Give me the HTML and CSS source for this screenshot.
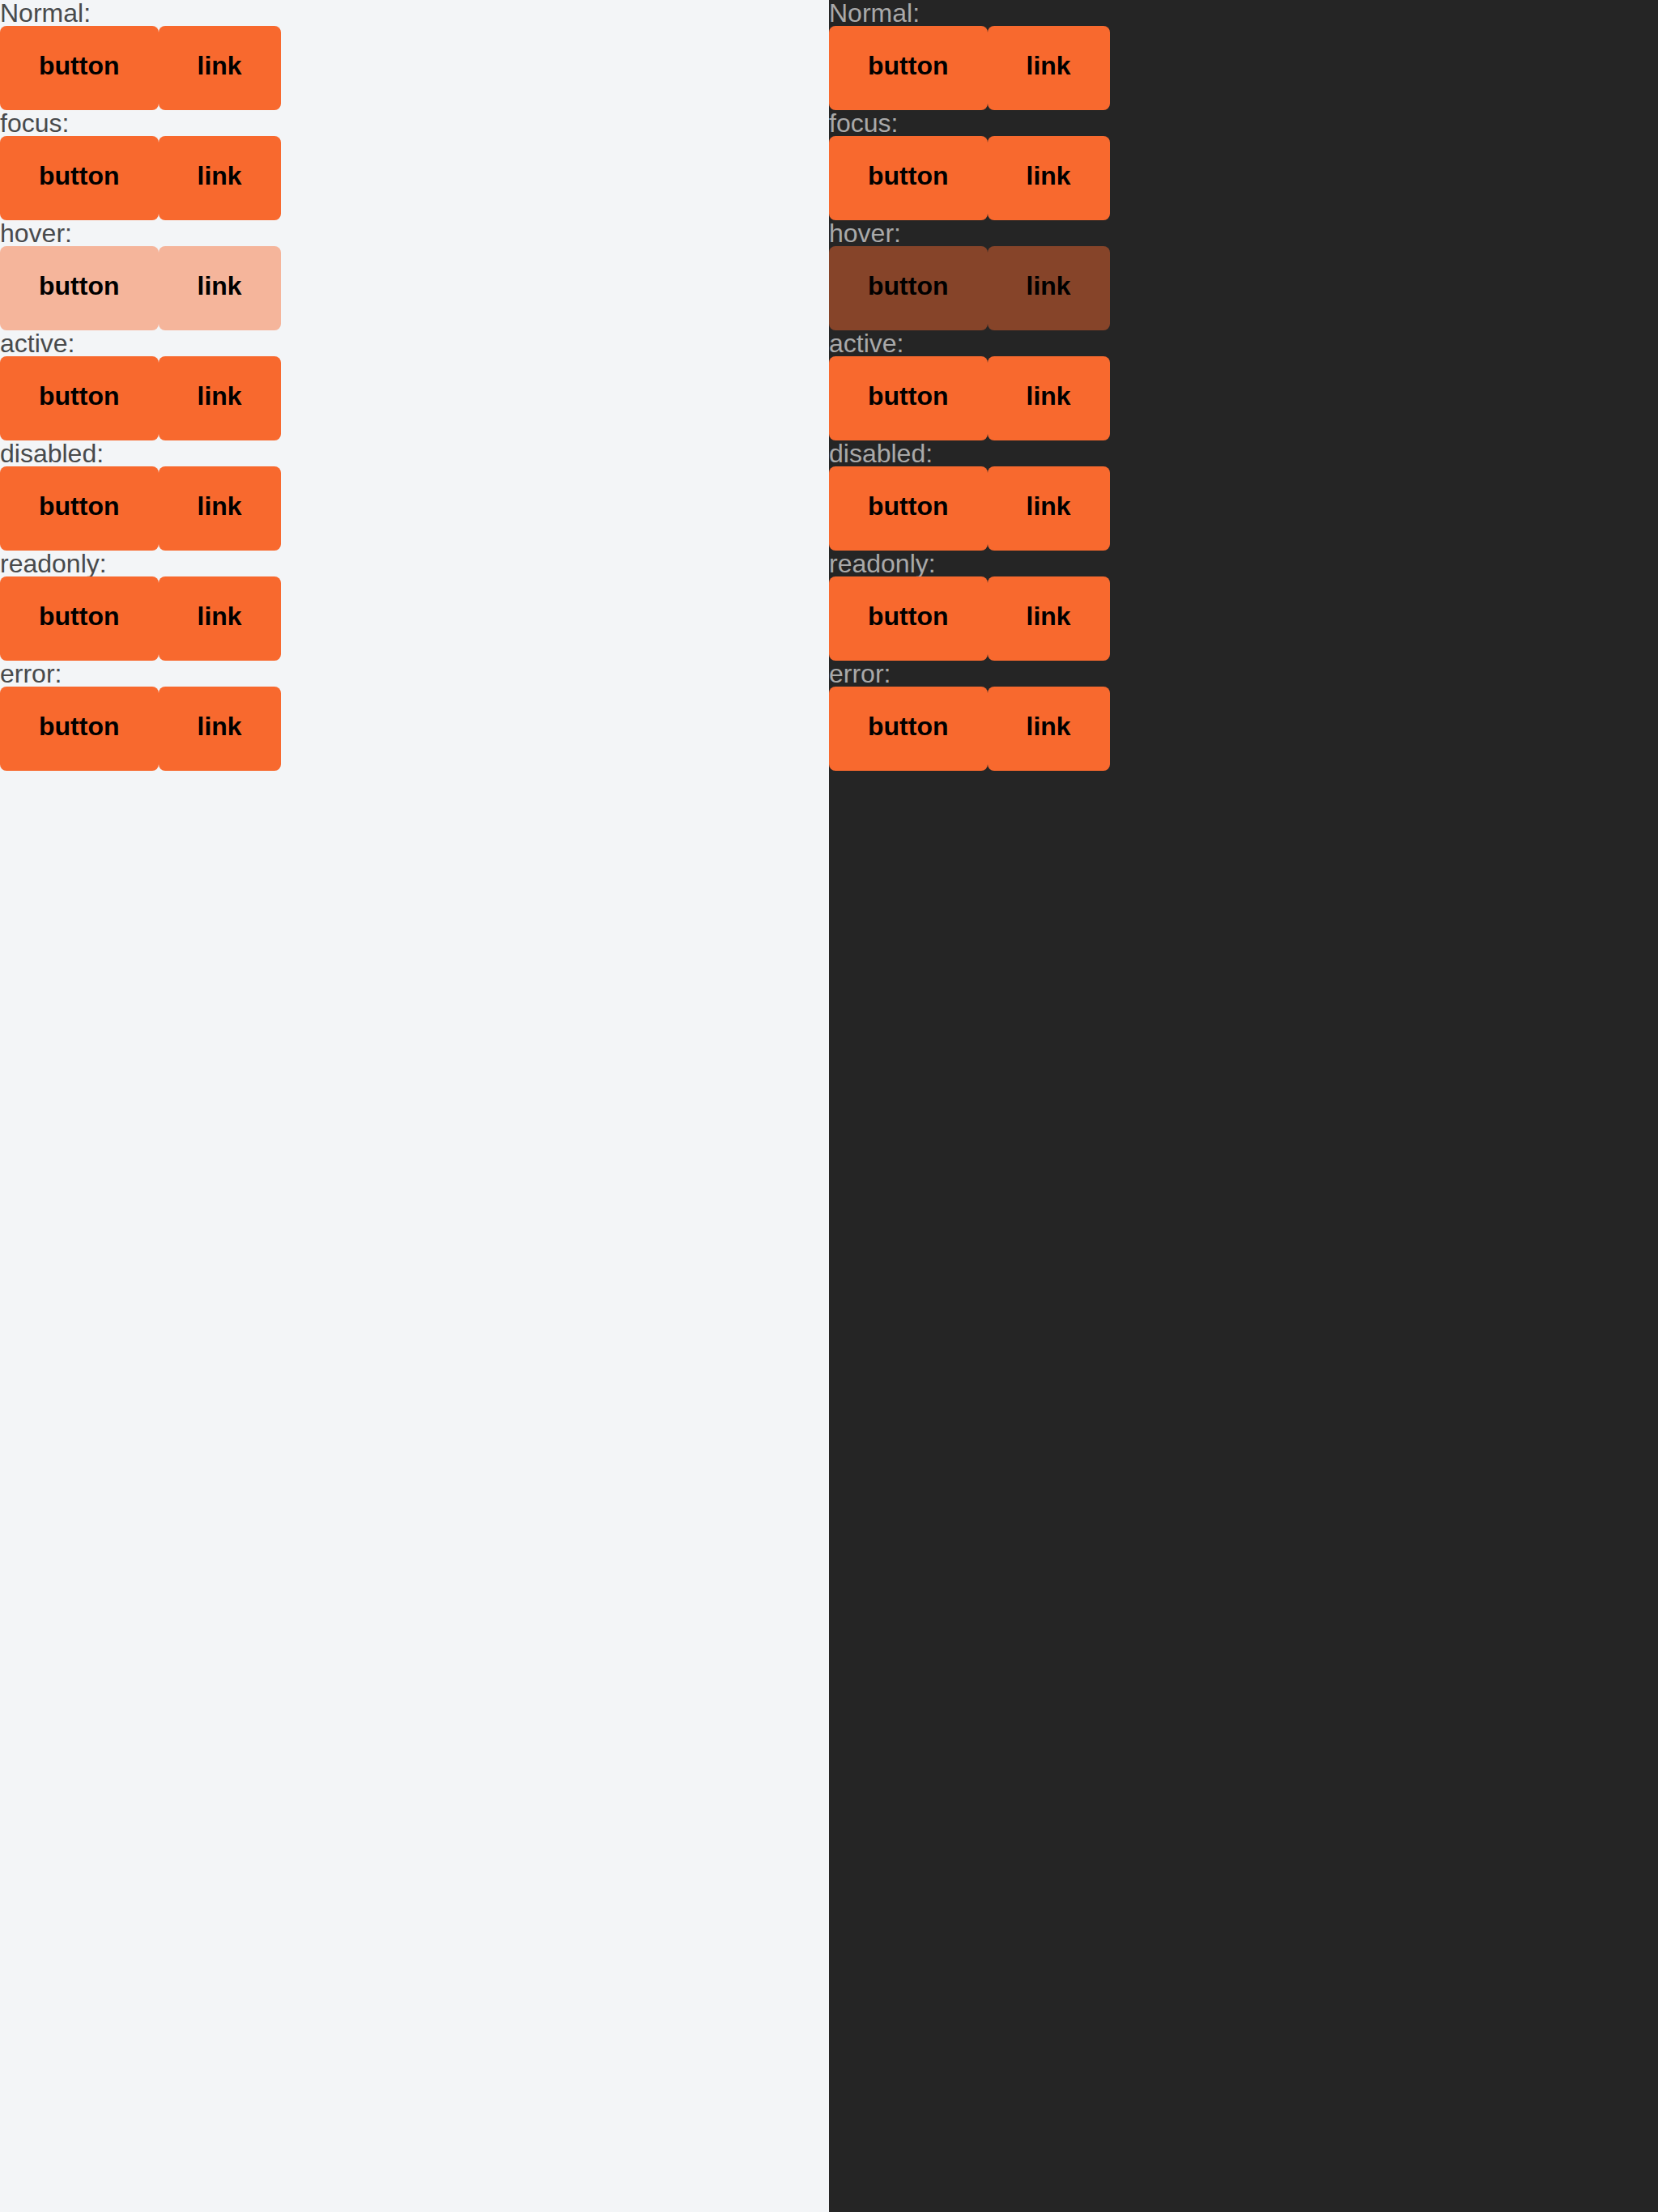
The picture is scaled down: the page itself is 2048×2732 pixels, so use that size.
FILE: index.html
```html
<!DOCTYPE html>
<html>
<head>
<meta charset="utf-8">
<link rel="stylesheet" href="styles.css">
</head>
<body>
<div class="split">
  <section class="panel light">
    <div class="label">Normal:</div>
    <div class="row"><button class="btn">button</button><a class="btn">link</a></div>
    <div class="label">focus:</div>
    <div class="row"><button class="btn">button</button><a class="btn">link</a></div>
    <div class="label">hover:</div>
    <div class="row"><button class="btn hover">button</button><a class="btn hover">link</a></div>
    <div class="label">active:</div>
    <div class="row"><button class="btn">button</button><a class="btn">link</a></div>
    <div class="label">disabled:</div>
    <div class="row"><button class="btn">button</button><a class="btn">link</a></div>
    <div class="label">readonly:</div>
    <div class="row"><button class="btn">button</button><a class="btn">link</a></div>
    <div class="label">error:</div>
    <div class="row"><button class="btn">button</button><a class="btn">link</a></div>
  </section>
  <section class="panel dark">
    <div class="label">Normal:</div>
    <div class="row"><button class="btn">button</button><a class="btn">link</a></div>
    <div class="label">focus:</div>
    <div class="row"><button class="btn">button</button><a class="btn">link</a></div>
    <div class="label">hover:</div>
    <div class="row"><button class="btn hover">button</button><a class="btn hover">link</a></div>
    <div class="label">active:</div>
    <div class="row"><button class="btn">button</button><a class="btn">link</a></div>
    <div class="label">disabled:</div>
    <div class="row"><button class="btn">button</button><a class="btn">link</a></div>
    <div class="label">readonly:</div>
    <div class="row"><button class="btn">button</button><a class="btn">link</a></div>
    <div class="label">error:</div>
    <div class="row"><button class="btn">button</button><a class="btn">link</a></div>
  </section>
</div>
</body>
</html>
```
FILE: styles.css
```css
html, body {
  margin: 0;
  padding: 0;
}
body {
  font-family: "Liberation Sans", Arial, Helvetica, sans-serif;
}
.split {
  display: grid;
  grid-template-columns: 1024px 1024px;
  height: 2732px;
}
.panel {
  display: flex;
  flex-direction: column;
  align-items: flex-start;
}
.light {
  background: #f3f5f7;
  color: #484a4c;
}
.dark {
  background: #252525;
  color: #a9a9a9;
}
.label {
  font-size: 32px;
  line-height: 32px;
  height: 32px;
}
.row {
  display: flex;
}
.btn {
  box-sizing: border-box;
  height: 104px;
  margin: 0;
  border: 0;
  border-radius: 8px;
  padding: 33px 48px 39px;
  background: #f8692e;
  color: #000;
  font-family: "Liberation Sans", Arial, Helvetica, sans-serif;
  font-size: 32px;
  font-weight: 700;
  line-height: 32px;
  text-decoration: none;
  display: flex;
  align-items: center;
  justify-content: center;
  cursor: pointer;
}
.btn.hover {
  background: rgba(248, 105, 46, 0.46);
}
```
